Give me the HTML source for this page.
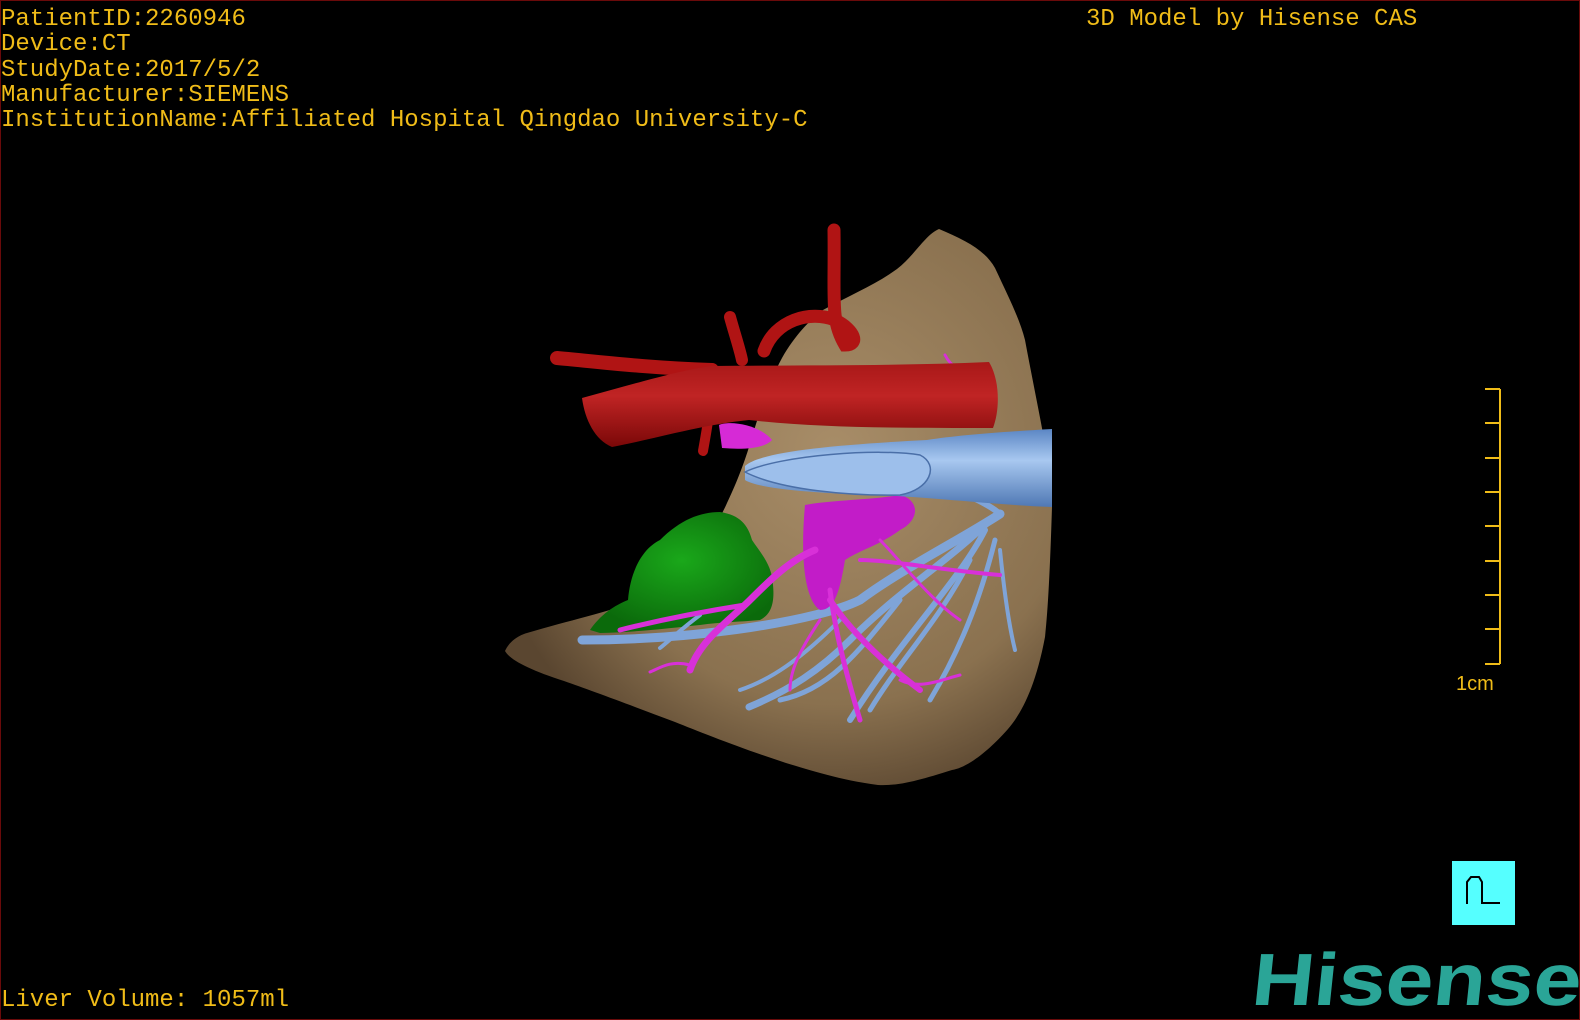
<!DOCTYPE html>
<html><head><meta charset="utf-8"><style>
html,body{margin:0;padding:0;background:#000;width:1580px;height:1020px;overflow:hidden}
svg{display:block}
.t{font-family:"Liberation Mono",monospace;font-size:24px;fill:#f0bc18}
</style></head><body>
<svg width="1580" height="1020" viewBox="0 0 1580 1020">
<defs>
<radialGradient id="lv" cx="0.6" cy="0.4" r="0.65"><stop offset="0" stop-color="#a88d68"/><stop offset="0.7" stop-color="#8a714f"/><stop offset="1" stop-color="#5a4630"/></radialGradient>
<linearGradient id="ao" x1="0" y1="0" x2="0" y2="1"><stop offset="0" stop-color="#a81818"/><stop offset="0.4" stop-color="#c02424"/><stop offset="1" stop-color="#7a0808"/></linearGradient>
<linearGradient id="iv" x1="0" y1="0" x2="0" y2="1"><stop offset="0" stop-color="#5b86c4"/><stop offset="0.4" stop-color="#a8c8f0"/><stop offset="1" stop-color="#4f78b4"/></linearGradient>
<radialGradient id="gr" cx="0.5" cy="0.4" r="0.6"><stop offset="0" stop-color="#1aa81a"/><stop offset="1" stop-color="#0b6a0b"/></radialGradient>
</defs>
<rect x="0.5" y="0.5" width="1579" height="1019" fill="#000" stroke="#6a0a0a"/>
<path d="M939 229 C965 240 985 250 995 268 C1010 300 1020 320 1025 340 C1040 420 1052 470 1052 507 C1050 570 1048 610 1045 637 C1035 690 1020 715 1008 729 C985 755 965 768 952 770 C920 780 900 786 878 785 C840 780 810 770 786 763 C740 748 700 732 675 722 C630 705 590 690 564 681 C530 670 510 660 505 651 C510 640 520 635 527 633 C570 620 610 612 638 600 C690 570 715 530 727 503 C738 480 745 460 749 447 C760 410 770 380 782 358 C795 335 810 320 823 310 C850 295 875 285 897 269 C915 255 925 235 939 229 Z" fill="url(#lv)"/>
<path d="M590 630 C600 615 615 605 628 600 C630 575 640 550 660 540 C680 520 700 512 720 512 C740 515 748 525 752 540 C762 555 772 565 773 585 C775 605 770 615 760 620 C740 622 720 622 700 625 C670 628 640 632 600 633 Z" fill="url(#gr)"/>
<g stroke="#7fa4d8" fill="none" stroke-linecap="round">
<path d="M1000 514 C960 540 900 570 860 600 C820 620 700 640 582 640" stroke-width="9"/>
<path d="M990 520 C950 560 900 590 850 640 C820 670 790 690 749 707" stroke-width="7"/>
<path d="M985 530 C960 580 900 640 850 720" stroke-width="6"/>
<path d="M995 540 C980 600 960 650 930 700" stroke-width="5"/>
<path d="M1000 550 C1005 600 1010 630 1015 650" stroke-width="4"/>
<path d="M970 560 C940 620 900 660 870 710" stroke-width="5"/>
<path d="M930 480 C960 490 990 505 1000 514" stroke-width="6"/>
<path d="M900 600 C860 650 830 690 780 700" stroke-width="5"/>
<path d="M840 620 C800 660 770 680 740 690" stroke-width="4"/>
<path d="M700 615 C680 630 670 640 660 648" stroke-width="4"/>
</g>
<path d="M719 425 C730 420 760 425 772 440 C765 448 745 450 722 448 Z" fill="#d62ad6"/>
<path d="M805 505 C830 500 870 500 900 495 C920 500 920 520 900 530 C880 545 860 550 845 560 C840 590 835 610 820 610 C805 600 800 560 805 505 Z" fill="#c21cc8"/>
<g stroke="#d830d8" fill="none" stroke-linecap="round">
<path d="M815 550 C790 560 770 580 750 600 C730 620 700 640 690 670" stroke-width="7"/>
<path d="M745 605 C700 612 660 620 620 630" stroke-width="5"/>
<path d="M830 600 C850 630 880 660 920 690" stroke-width="6"/>
<path d="M830 590 C835 630 845 670 860 720" stroke-width="5"/>
<path d="M860 560 C890 560 940 570 1000 575" stroke-width="4"/>
<path d="M880 540 C900 560 930 600 960 620" stroke-width="3"/>
<path d="M820 620 C800 650 790 670 790 690" stroke-width="3"/>
<path d="M690 665 C670 660 660 668 650 672" stroke-width="3"/>
<path d="M900 680 C920 690 940 680 960 675" stroke-width="3"/>
<path d="M945 355 C950 365 960 375 985 375" stroke-width="3"/>
</g>
<path d="M745 466 C760 452 830 445 927 440 C960 435 1000 432 1052 429 L1052 507 C1000 505 960 500 897 496 C830 494 760 490 745 480 Z" fill="url(#iv)"/>
<path d="M745 472 C780 455 880 448 920 455 C940 465 930 490 900 495 C850 496 780 490 745 472 Z" fill="#9dbfeb" stroke="#4a6fa8" stroke-width="1.5"/>
<g stroke="#b01414" fill="none" stroke-linecap="round">
<path d="M557 358 C600 362 650 368 712 370" stroke-width="14"/>
<path d="M764 351 C775 320 810 310 835 320 C855 330 860 345 845 345 C830 320 835 300 834 230" stroke-width="13"/>
<path d="M730 317 C735 335 740 350 742 360" stroke-width="12"/>
<path d="M708 421 C706 435 704 445 703 451" stroke-width="10"/>
</g>
<path d="M582 398 C630 385 680 370 712 366 C800 365 900 366 989 362 C1000 380 1000 410 993 428 C900 428 820 428 749 420 C700 425 650 440 612 447 C595 440 585 420 582 398 Z" fill="url(#ao)"/>
<text class="t" x="1" y="25">PatientID:2260946</text>
<text class="t" x="1" y="50">Device:CT</text>
<text class="t" x="1" y="76">StudyDate:2017/5/2</text>
<text class="t" x="1" y="101">Manufacturer:SIEMENS</text>
<text class="t" x="1" y="126">InstitutionName:Affiliated Hospital Qingdao University-C</text>
<text class="t" x="1086" y="25">3D Model by Hisense CAS</text>
<text class="t" x="1" y="1006">Liver Volume: 1057ml</text>
<g stroke="#f0bc18" stroke-width="2" fill="none">
<path d="M1500 389 V664"/>
<path d="M1485 389 H1500 M1485 423 H1500 M1485 458 H1500 M1485 492 H1500 M1485 526 H1500 M1485 561 H1500 M1485 595 H1500 M1485 629 H1500 M1485 664 H1500"/>
</g>
<text x="1456" y="690" font-family="Liberation Sans,sans-serif" font-size="20" fill="#f0bc18">1cm</text>
<rect x="1452" y="861" width="63" height="64" fill="#55ffff"/>
<path d="M1467 904 V882 L1471 877 H1479 L1482 882 V903 H1500" fill="none" stroke="#000" stroke-width="2"/>
<text x="0" y="0" transform="translate(1250 1005) skewX(-6) scale(1.16 1)" font-family="Liberation Sans,sans-serif" font-weight="bold" font-size="74" fill="#2aa597">Hisense</text>
</svg>
</body></html>
